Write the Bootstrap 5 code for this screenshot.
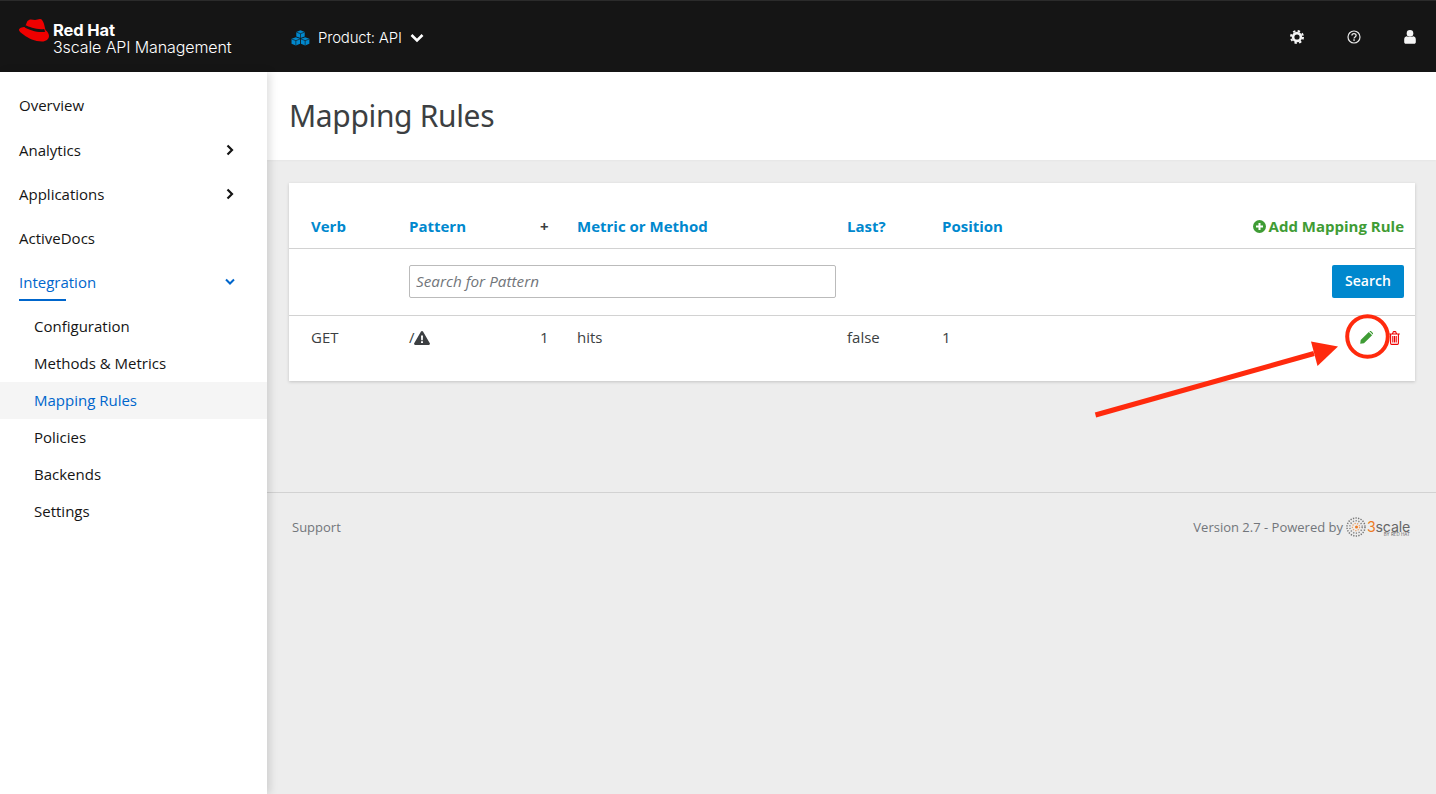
<!DOCTYPE html>
<html lang="en">
<head>
    <meta charset="UTF-8">
    <meta name="viewport" content="width=device-width, initial-scale=1">
    <title>Mapping Rules</title>
    <link href="https://cdn.jsdelivr.net/npm/bootstrap@5.3.0/dist/css/bootstrap.min.css" rel="stylesheet">
    <script src="https://cdn.jsdelivr.net/npm/bootstrap@5.3.0/dist/js/bootstrap.bundle.min.js"></script>
    <style>
        html, body { height: 100%; }
        body {
            background: #ededed;
            color: #151515;
            font-family: "Open Sans", "Liberation Sans", sans-serif;
            font-size: 15px;
            overflow: hidden;
        }
        .top-bar {
            height: 72px;
            background: #151515;
            border-top: 1px solid #2b2b2b;
            color: #fff;
        }
        .brand-box { width: 291px; padding-left: 19px; gap: 4px; }
        .brand-hat { margin-bottom: 12px; flex: none; }
        .brand-text { font-family: "Inter", "Liberation Sans", sans-serif; line-height: 17px; padding-top: 4px; }
        .brand-text b { display: block; font-size: 16.500px; font-weight: 700; letter-spacing: -.1px; }
        .brand-text span { display: block; font-size: 16px; font-weight: 300; letter-spacing: -.1px; }
        .product-pick { font-family: "Inter", "Liberation Sans", sans-serif; font-size: 15px; font-weight: 300; letter-spacing: -.2px; gap: 8px; padding-top: 3px; }
        .top-icons { margin-left: auto; }
        .top-icons svg { display: block; }
        .side-nav {
            width: 267px;
            flex: none;
            background: #fff;
            box-shadow: 3px 0 8px rgba(0, 0, 0, .13);
            padding-top: 11.500px;
            position: relative;
            z-index: 2;
        }
        .side-nav .nav-link { color: #151515; padding: 0; display: flex; align-items: center; justify-content: space-between; font-size: 15px; }
        .side-top { height: 44.200px; padding: 0 33px 0 19px !important; }
        .side-sub { height: 37px; padding-left: 34px !important; }
        .side-sub.is-here { background: #f5f5f5; color: #06c !important; }
        .side-first { margin-top: 3.800px; }
        .side-open { color: #06c !important; position: relative; }
        .side-open::after {
            content: "";
            position: absolute;
            left: 19px;
            bottom: 3px;
            width: 47px;
            height: 2px;
            background: #06c;
        }
        .title-band { height: 88px; background: #fff; padding: 0 22px; box-shadow: 0 1px 2px rgba(0, 0, 0, .03); }
        .title-band h1 { font-size: 30px; font-weight: 400; color: #3c3f42; margin: 0; line-height: 88px; font-family: "Noto Sans", "Open Sans", sans-serif; letter-spacing: -.35px; }
        .rules-box {
            margin: 23px 21px 0 22px;
            background: #fff;
            box-shadow: 0 1px 3px rgba(0, 0, 0, .18);
        }
        .rules-table { table-layout: fixed; width: 100%; margin: 0; font-size: 15px; color: #3c3f42; }
        .rules-table th, .rules-table td { padding: 0 11px; border-bottom: 1px solid #d2d2d2; vertical-align: top; box-shadow: none; }
        .rules-table th:first-child, .rules-table td:first-child { padding-left: 22px; }
        .rules-table thead th { height: 65px; padding-top: 33px; font-weight: 700; line-height: 21px; }
        .rules-table thead a { color: #0088ce; text-decoration: none; }
        .rules-table .search-row td { height: 67px; padding-top: 16px; }
        .rules-table .search-row td.pattern-cell { padding-right: 0; }
        .rules-table .data-row td { height: 66px; padding-top: 11px; line-height: 21px; border-bottom: 0; }
        .rules-table .data-row td.row-tools { padding-right: 15px; }
        .add-rule { color: #3f9c35 !important; gap: 3px; }
        .warn-mark { margin-left: -1px; vertical-align: -2px; }
        .pattern-input {
            height: 33px;
            border: 1px solid #bbb;
            border-radius: 2px;
            padding: 0 6px;
            font-size: 15.300px;
            font-style: italic;
            color: #72767b;
        }
        .pattern-input::placeholder { color: #72767b; }
        .search-btn { background: #0088ce; border: 0; border-radius: 2px; color: #fff; height: 33px; width: 72px; padding: 0 0 2px; font-size: 14px; font-weight: 600; }
        .foot-row {
            margin-top: 111px;
            border-top: 1px solid #d2d2d2;
            padding: 24px 26px 0 25px;
            color: #72767b;
            font-size: 13px;
            line-height: 20px;
        }
        .foot-version { gap: 3px; }
        .scale-mark { font-family: "Inter", "Liberation Sans", sans-serif; color: #666; display: block; height: 20px; padding-top: 4px; margin-left: -2px; }
        .scale-word { display: block; font-size: 14.200px; line-height: 12px; letter-spacing: -.2px; }
        .scale-word em { font-style: normal; color: #ee7a22; }
        .scale-by { display: block; font-size: 4.500px; line-height: 5px; margin-top: -1px; text-align: right; }
        .note-layer { position: absolute; left: 0; top: 0; pointer-events: none; z-index: 5; }
    </style>
</head>
<body>
    <header class="top-bar d-flex align-items-center">
        <div class="brand-box d-flex align-items-center">
            <svg class="brand-hat" width="30" height="23" viewBox="0 0 30 23">
                <path fill="#e00" d="M10 1C12 0 14 1 16 1C18 1 19 0 21 0C23 0 24 2 25 5L26.500 11C28.500 12.500 30 15 30 17C30 20 27 22.500 23 22.500C16 22.500 9 19 5 16C2 14 0 12 0 11C0 9 3 8 6 8L8 3C8.500 2 9 1.500 10 1z"/>
                <path fill="#151515" d="M6.500 6C10 8 18 11 25.200 10L26.200 12.800C19 14 10 11 5.700 8.500z"/>
            </svg>
            <div class="brand-text"><b>Red Hat</b><span>3scale API Management</span></div>
        </div>
        <div class="product-pick d-flex align-items-center">
            <svg width="19" height="16" viewBox="0 0 18 15" fill="#0088ce">
                <path d="M9 .2l4 1.500v4.300l-4 1.500-4-1.500V1.700z"/>
                <path d="M4.600 6.800l4 1.500v4.700l-4 1.700L.5 13V8.300z"/>
                <path d="M13.400 6.800l4 1.500V13l-4 1.700-4-1.700V8.300z"/>
                <path stroke="#151515" stroke-width=".6" fill="none" d="M5 1.900l4 1.500 4-1.500M9 3.400v4.200M.7 8.500l3.900 1.500 3.900-1.500M4.600 10v4.400M9.500 8.500l3.900 1.500 3.900-1.500M13.400 10v4.400"/>
            </svg>
            <span>Product: API</span>
            <svg width="14" height="10" viewBox="0 0 14 10"><path d="M1.500 2l5.500 5.500L12.500 2" fill="none" stroke="#fff" stroke-width="2.600"/></svg>
        </div>
        <div class="top-icons d-flex align-items-center">
            <svg width="14" height="14" viewBox="0 0 14 14" style="margin-right:43px">
                <circle cx="7" cy="7" r="3.900" fill="none" stroke="#f5f5f5" stroke-width="2.600"/>
                <circle cx="7" cy="7" r="6" fill="none" stroke="#f5f5f5" stroke-width="2" stroke-dasharray="2.350 2.360"/>
            </svg>
            <svg width="14" height="14" viewBox="0 0 14 14" style="margin-right:43px">
                <circle cx="7" cy="7" r="6" fill="none" stroke="#e8e8e8" stroke-width="1.200"/>
                <path d="M4.900 5.600c0-1.300 1-2 2.100-2s2.100.7 2.100 1.900c0 1.500-2 1.500-2 3" fill="none" stroke="#e8e8e8" stroke-width="1.300"/>
                <rect x="6.300" y="9.300" width="1.500" height="1.500" fill="#e8e8e8"/>
            </svg>
            <svg width="12" height="14" viewBox="0 0 12 14" style="margin-right:20px">
                <circle cx="6" cy="3.400" r="3.300" fill="#f5f5f5"/>
                <path fill="#f5f5f5" d="M2.600 6.300c1 .9 5.800.9 6.800 0 1.500.3 2.400 1.500 2.400 3.300v2.700c0 .9-.7 1.500-1.600 1.500H1.800C.9 13.800.2 13.200.2 12.300V9.600c0-1.800.9-3 2.400-3.300z"/>
            </svg>
        </div>
    </header>

    <div class="d-flex" style="height:722px">
        <nav class="side-nav nav flex-column flex-nowrap">
            <a class="nav-link side-top" href="#">Overview</a>
            <a class="nav-link side-top" href="#">Analytics
                <svg width="8" height="12" viewBox="0 0 8 12"><path d="M1.500 1.500L6 6l-4.500 4.500" fill="none" stroke="#151515" stroke-width="2.200"/></svg></a>
            <a class="nav-link side-top" href="#">Applications
                <svg width="8" height="12" viewBox="0 0 8 12"><path d="M1.500 1.500L6 6l-4.500 4.500" fill="none" stroke="#151515" stroke-width="2.200"/></svg></a>
            <a class="nav-link side-top" href="#">ActiveDocs</a>
            <a class="nav-link side-top side-open" href="#">Integration
                <svg width="10" height="8" viewBox="0 0 10 8" style="margin-right:-1px"><path d="M1 1.500L5 5.500l4-4" fill="none" stroke="#06c" stroke-width="2"/></svg></a>
            <a class="nav-link side-sub side-first" href="#">Configuration</a>
            <a class="nav-link side-sub" href="#">Methods &amp; Metrics</a>
            <a class="nav-link side-sub is-here" href="#">Mapping Rules</a>
            <a class="nav-link side-sub" href="#">Policies</a>
            <a class="nav-link side-sub" href="#">Backends</a>
            <a class="nav-link side-sub" href="#">Settings</a>
        </nav>
        <main class="flex-grow-1">
            <div class="title-band"><h1>Mapping Rules</h1></div>
            <div class="rules-box">
                <table class="table rules-table">
                    <colgroup><col style="width:109px"><col style="width:131px"><col style="width:37px"><col style="width:270px"><col style="width:95px"><col style="width:280px"><col></colgroup>
                    <thead>
                        <tr>
                            <th><a href="#">Verb</a></th>
                            <th><a href="#">Pattern</a></th>
                            <th>+</th>
                            <th><a href="#">Metric or Method</a></th>
                            <th><a href="#">Last?</a></th>
                            <th><a href="#">Position</a></th>
                            <th class="text-end">
                                <a href="#" class="add-rule d-inline-flex align-items-center">
                                    <svg width="13" height="13" viewBox="0 0 13 13"><circle cx="6.500" cy="6.500" r="6.500" fill="#3f9c35"/><path d="M6.500 3v7M3 6.500h7" stroke="#fff" stroke-width="2"/></svg>
                                    Add Mapping Rule
                                </a>
                            </th>
                        </tr>
                    </thead>
                    <tbody>
                        <tr class="search-row">
                            <td></td>
                            <td colspan="3" class="pattern-cell"><input type="text" class="form-control pattern-input" placeholder="Search for Pattern"></td>
                            <td colspan="3" class="text-end"><button class="btn search-btn">Search</button></td>
                        </tr>
                        <tr class="data-row">
                            <td>GET</td>
                            <td>/<svg class="warn-mark" width="16" height="14" viewBox="0 0 16 14"><path fill="#3c3f42" d="M8 0c.4 0 .8.2 1 .6l6.800 11.700c.4.700-.1 1.600-1 1.600H1.200c-.9 0-1.400-.9-1-1.600L7 .6C7.200.2 7.600 0 8 0z"/><path fill="#fff" d="M7 4.400h2l-.2 4.900H7.200zM7 10.200h2v1.900H7z"/></svg></td>
                            <td>1</td>
                            <td>hits</td>
                            <td>false</td>
                            <td>1</td>
                            <td class="text-end row-tools">
                                <svg width="13" height="13" viewBox="0 0 13 13" style="margin-right:16px;vertical-align:-1px"><path fill="#3f9c35" d="M8.800.9l3.300 3.300-8.100 8.100L.2 12.800l.5-3.800zM9.700 0c.4-.3.900-.3 1.200 0l2 2c.3.300.3.800 0 1.200l-.2.200L9.500.2z"/></svg><svg width="11" height="14" viewBox="0 0 11 14" style="vertical-align:-2px"><path fill="none" stroke="#e00" stroke-width="1.100" d="M1.600 3.400v8.900c0 .7.400 1.100 1 1.100h5.800c.6 0 1-.4 1-1.100V3.400M.2 3h10.600M3.400 3l.7-1.800c.1-.3.300-.6.700-.6h1.400c.4 0 .6.300.7.600L7.600 3M3.800 5.100v6.300M5.500 5.100v6.300M7.200 5.100v6.300"/></svg>
                            </td>
                        </tr>
                    </tbody>
                </table>
            </div>
            <footer class="foot-row d-flex justify-content-between">
                <span>Support</span>
                <span class="d-flex align-items-center foot-version">Version 2.7 - Powered by
                    <svg width="20" height="20" viewBox="0 0 20 20">
                        <circle cx="10" cy="10" r="9" fill="none" stroke="#777" stroke-width="1.500" stroke-dasharray="1.300 1.300"/>
                        <circle cx="10" cy="10" r="6.200" fill="none" stroke="#888" stroke-width="1.500" stroke-dasharray="1.300 1.500"/>
                        <circle cx="10" cy="10" r="3.600" fill="none" stroke="#e8a06a" stroke-width="1.300" stroke-dasharray="1.300 1.200"/>
                        <circle cx="10.500" cy="10" r="1.500" fill="#ee7a22"/>
                    </svg>
                    <span class="scale-mark"><span class="scale-word"><em>3</em>scale</span><span class="scale-by">BY RED HAT</span></span>
                </span>
            </footer>
        </main>
    </div>

    <svg class="note-layer" width="1436" height="794" viewBox="0 0 1436 794">
        <path d="M1095.500 415L1314 353.500" stroke="#ff2a0d" stroke-width="5" fill="none"/>
        <path d="M1338 346.500L1311 341.500L1317.500 366z" fill="#ff2a0d"/>
        <circle cx="1367.500" cy="336.500" r="20.300" fill="none" stroke="#ff2a0d" stroke-width="4"/>
    </svg>
</body>
</html>
